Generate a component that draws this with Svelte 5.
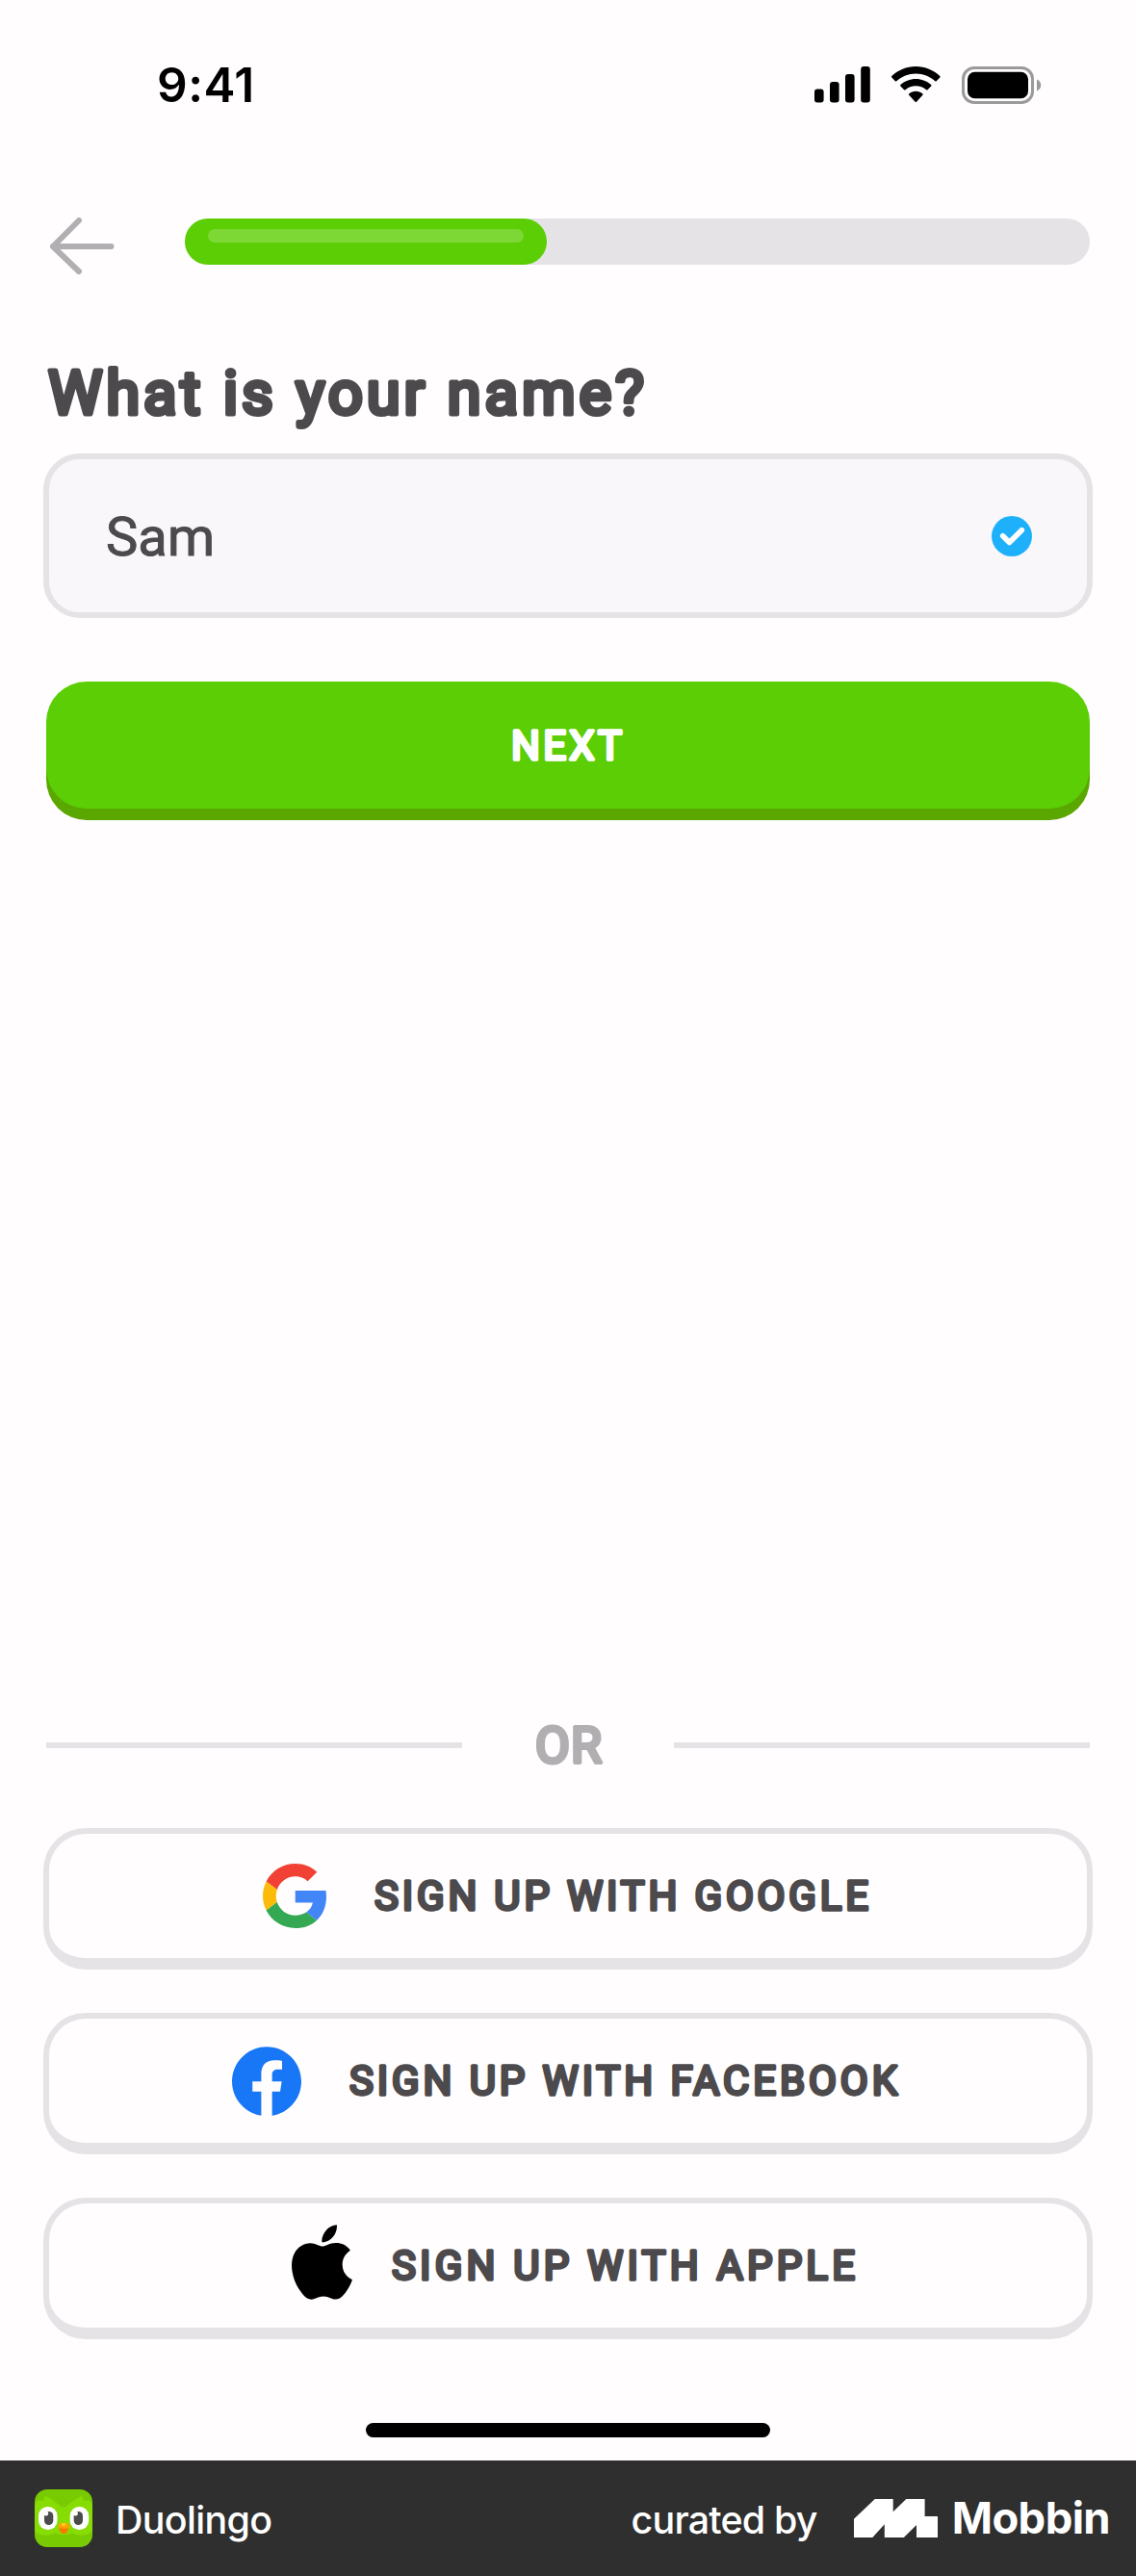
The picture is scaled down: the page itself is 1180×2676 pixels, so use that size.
<script>
  const providers = [
    { id: 'google', label: 'SIGN UP WITH GOOGLE', width: 513 },
    { id: 'facebook', label: 'SIGN UP WITH FACEBOOK', width: 569 },
    { id: 'apple', label: 'SIGN UP WITH APPLE', width: 481 }
  ];
  const progress = 40;
</script>

<!-- Text with round stroke joins, which gives the letters soft corners -->
{#snippet rounded(text, kind, width, height, baseline)}
  <svg class="rounded {kind}" {width} {height} viewBox="0 0 {width} {height}">
    <text x="0" y={baseline} textLength={width}>{text}</text>
  </svg>
{/snippet}

<div class="screen">
  <header class="status">
    <span class="time">9:41</span>
    <div class="indicators">
      <svg width="59" height="38" viewBox="0 0 59 38">
        <rect x="0" y="23.5" width="9.6" height="14" rx="3" />
        <rect x="16" y="16" width="9.6" height="21.5" rx="3" />
        <rect x="32" y="8" width="9.6" height="29.5" rx="3" />
        <rect x="48.2" y="0" width="9.6" height="37.5" rx="3" />
      </svg>
      <svg class="wifi" width="51" height="38" viewBox="0 0 51 38">
        <path d="M25.3 0C35 0 43.800 3.800 50.300 10.100q.6.7 0 1.400l-3.600 3.700q-.7.700-1.400 0C39.900 10.200 33 7.400 25.300 7.400S10.700 10.200 5.300 15.200q-.7.700-1.400 0L.3 11.500q-.6-.7 0-1.400C6.800 3.800 15.600 0 25.300 0z" />
        <path d="M25.300 12.900c6.100 0 11.700 2.300 15.900 6.200q.7.700 0 1.400l-3.700 3.800q-.7.600-1.400 0c-2.900-2.600-6.700-4.100-10.800-4.100s-7.900 1.500-10.800 4.100q-.7.600-1.400 0l-3.700-3.800q-.7-.7 0-1.400c4.200-3.900 9.800-6.200 15.900-6.200z" />
        <path d="M25.300 25.700c2.700 0 5.100 1 7 2.600q.8.700.1 1.400l-6.400 7q-.7.700-1.400 0l-6.400-7q-.7-.7.100-1.400c1.900-1.600 4.300-2.600 7-2.600z" />
      </svg>
      <svg width="83" height="39" viewBox="0 0 83 39">
        <rect x="1.500" y="1.500" width="72" height="36" rx="11.500" fill="none" stroke="#9b9a9b" stroke-width="3" />
        <rect x="6" y="5.700" width="63" height="27.600" rx="7.500" />
        <path d="M78 13.500c2.600 1 4.200 3.300 4.200 6s-1.600 5-4.200 6z" fill="#9b9a9b" />
      </svg>
    </div>
  </header>

  <nav class="top">
    <svg class="back" width="68" height="60" viewBox="0 0 68 60">
      <path d="M31 3 4 30 31 56M4 30H64.500" />
    </svg>
    <div class="track"><div class="fill" style:width="{progress}%"><i></i></div></div>
  </nav>

  <main>
    <h1>{@render rounded('What is your name?', 'title', 619, 50, 48)}</h1>
    <div class="field">
      {@render rounded('Sam', 'value', 113, 42, 41)}
      <svg width="42" height="42" viewBox="0 0 42 42">
        <circle cx="21" cy="21" r="21" fill="#1fb0fb" />
        <path d="M11.700 20.800l6.800 6.800L31.300 14.800" fill="none" stroke="#fff" stroke-width="5.600" stroke-linecap="round" stroke-linejoin="round" />
      </svg>
    </div>
    <button class="next">{@render rounded('NEXT', 'action', 115, 33, 30.5)}</button>
  </main>

  <section class="alternatives">
    <div class="or">
      <hr />
      {@render rounded('OR', 'divider', 69, 41, 39)}
      <hr />
    </div>
    {#each providers as p}
      <button class="provider {p.id}">
        {#if p.id === 'google'}
          <svg width="66" height="67" viewBox="0 0 47 48" preserveAspectRatio="none">
            <path fill="#f04134" d="M24 9.500c3.540 0 6.710 1.220 9.210 3.600l6.850-6.850C35.900 2.380 30.470 0 24 0 14.620 0 6.510 5.380 2.560 13.220l7.980 6.190C12.430 13.720 17.740 9.500 24 9.500z" />
            <path fill="#4285f7" d="M46.980 24.550c0-1.570-.15-3.090-.38-4.550H24v9.020h12.940c-.58 2.960-2.260 5.480-4.780 7.180l7.730 6c4.510-4.180 7.090-10.360 7.090-17.650z" />
            <path fill="#fcbb0a" d="M10.530 28.590c-.48-1.450-.76-2.990-.76-4.590s.27-3.140.76-4.590l-7.980-6.190C.92 16.460 0 20.120 0 24c0 3.880.92 7.540 2.560 10.780l7.970-6.190z" />
            <path fill="#34a853" d="M24 48c6.480 0 11.930-2.130 15.890-5.810l-7.730-6c-2.150 1.450-4.920 2.300-8.160 2.300-6.260 0-11.570-4.220-13.470-9.910l-7.980 6.190C6.510 42.620 14.620 48 24 48z" />
          </svg>
        {:else if p.id === 'facebook'}
          <svg width="72" height="72" viewBox="0 0 24 24">
            <path fill="#1877f6" d="M24 12.073c0-6.627-5.373-12-12-12s-12 5.373-12 12c0 5.990 4.388 10.954 10.125 11.854v-8.385H7.078v-3.470h3.047V9.430c0-3.007 1.792-4.669 4.533-4.669 1.312 0 2.686.235 2.686.235v2.953H15.830c-1.491 0-1.956.925-1.956 1.874v2.250h3.328l-.532 3.470h-2.796v8.385C19.612 23.027 24 18.062 24 12.073z" />
          </svg>
        {:else}
          <svg width="63" height="78" viewBox="2.220 0 19.560 24">
            <path d="M12.152 6.896c-.948 0-2.415-1.078-3.960-1.040-2.040.027-3.910 1.183-4.961 3.014-2.117 3.675-.546 9.103 1.519 12.090 1.013 1.454 2.208 3.090 3.792 3.039 1.520-.065 2.090-.987 3.935-.987 1.831 0 2.350.987 3.960.948 1.637-.026 2.676-1.480 3.676-2.948 1.156-1.688 1.636-3.325 1.662-3.415-.039-.013-3.182-1.221-3.220-4.857-.026-3.040 2.480-4.494 2.597-4.559-1.429-2.090-3.623-2.324-4.390-2.376-2-.156-3.675 1.090-4.610 1.090zM15.530 3.830c.843-1.012 1.400-2.427 1.245-3.830-1.207.052-2.662.805-3.532 1.818-.780.896-1.454 2.338-1.273 3.714 1.338.104 2.715-.688 3.559-1.701" />
          </svg>
        {/if}
        {@render rounded(p.label, 'action', p.width, 33, 30.5)}
      </button>
    {/each}
    <div class="home"></div>
  </section>

  <footer>
    <svg width="60" height="60" viewBox="0 0 60 60">
      <defs><clipPath id="tile"><rect width="60" height="60" rx="13" /></clipPath></defs>
      <g clip-path="url(#tile)">
        <rect width="60" height="60" fill="#78cb00" />
        <path d="M0 17 3 11l6 1 2-5c7 2 12 8 17 11q2 1 4 0c5-3 10-9 17-11l2 5 6-1 3 6v26c-5 6-16 6-21 2-3 3-15 3-18 0-5 4-16 4-21-2z" fill="#87dc04" />
        <rect x="4" y="18" width="19.500" height="24" rx="9.500" fill="#fff" />
        <rect x="36.700" y="18" width="19.500" height="24" rx="9.500" fill="#fff" />
        <rect x="10" y="23" width="9.300" height="14" rx="4.600" fill="#4b4b4b" />
        <rect x="40.700" y="23" width="9.300" height="14" rx="4.600" fill="#4b4b4b" />
        <circle cx="11.700" cy="25" r="2.500" fill="#fff" />
        <circle cx="42.400" cy="25" r="2.500" fill="#fff" />
        <path d="M25.500 40h9.500c0 8-9.500 8-9.500 0z" fill="#f57c00" />
        <path d="M24 38.500c2-5.500 10.500-5.500 13 0-1.500 3-11.500 3-13 0z" fill="#ffa200" />
        <ellipse cx="30" cy="36.500" rx="2.400" ry="1.500" fill="#ffd02b" />
      </g>
    </svg>
    <span class="app">Duolingo</span>
    <span class="by">curated by</span>
    <svg class="mark" width="87" height="40" viewBox="0 0 87 40">
      <path d="M21.800 0H40.700V13.300L54.300 0H73.600V18H87V40H65V27L51.800 40H31.800V26.300L19.300 40H0V20.700z" fill="#fff" />
    </svg>
    <span class="brand">Mobbin</span>
  </footer>
</div>

<style>
  :global(body) { margin: 0; background: #fffdfe; }
  .screen {
    width: 1180px;
    height: 2676px;
    display: flex;
    flex-direction: column;
    font-family: Inter, "Liberation Sans", sans-serif;
    color: #4c4a4c;
    overflow: hidden;
  }
  svg { display: block; flex: none; }
  button { font: inherit; margin: 0; box-sizing: border-box; }

  .status {
    height: 176px;
    box-sizing: border-box;
    padding: 0 98px 0 163px;
    display: flex;
    align-items: center;
    justify-content: space-between;
    color: #000;
  }
  .time { font-size: 49.5px; font-weight: 600; line-height: 60px; letter-spacing: 0.5px; }
  .indicators { display: flex; align-items: center; }
  .wifi { margin: 0 22px 0 21.500px; }

  .top {
    display: flex;
    align-items: flex-start;
    justify-content: space-between;
    padding: 50px 48px 0 51px;
  }
  .back path { fill: none; stroke: #b1afb1; stroke-width: 6; stroke-linecap: round; stroke-linejoin: round; }
  .track { width: 940px; height: 48px; margin-top: 1px; border-radius: 24px; background: #e5e3e6; }
  .fill { height: 48px; box-sizing: border-box; padding: 11px 24px; border-radius: 24px; background: #5bce05; }
  .fill i { display: block; height: 14px; border-radius: 7px; background: #7dd835; }

  .rounded { overflow: visible; }
  .rounded text { font-family: Roboto, sans-serif; font-weight: 400; fill: currentColor; stroke: currentColor; stroke-linejoin: round; }
  .title text { font-size: 63.500px; stroke-width: 5px; }
  .value text { font-size: 56px; stroke-width: 1px; }
  .action text { font-size: 42px; stroke-width: 3.400px; }
  .divider text { font-size: 52px; stroke-width: 4.200px; }

  main { padding: 96px 45px 0; }
  h1 { margin: 0 0 39px 5px; }
  .field {
    height: 171px;
    box-sizing: border-box;
    border: 6px solid #e5e3e6;
    border-radius: 38px;
    background: #f9f7fa;
    padding: 0 57px 0 59px;
    display: flex;
    align-items: center;
    justify-content: space-between;
  }
  .next {
    display: flex;
    align-items: center;
    justify-content: center;
    width: 1084px;
    height: 132px;
    margin: 66px 3px 0;
    padding: 0 4px 0 0;
    border: 0;
    border-radius: 42px;
    background: #5bce05;
    box-shadow: 0 12px 0 #5aa700;
    color: #fff;
  }

  .alternatives { margin-top: auto; padding: 0 45px; display: flex; flex-direction: column; }
  .or { display: flex; align-items: center; justify-content: space-between; margin: 0 3px 66px; color: #b1afb1; }
  .or hr { width: 432px; height: 6px; margin: 0; border: 0; background: #e5e3e6; }
  .provider {
    display: flex;
    align-items: center;
    justify-content: center;
    gap: 50px;
    width: 1090px;
    height: 147px;
    margin-bottom: 45px;
    padding: 0 6px 0 0;
    border: solid #e5e3e6;
    border-width: 6px 6px 12px;
    border-radius: 44px;
    background: #fffdfe;
    color: #4c4a4c;
  }
  .facebook { padding-right: 8px; }
  .apple { gap: 41px; padding: 0 0 0 10px; margin-bottom: 87px; }
  .apple svg:first-child { margin-bottom: 7px; }
  .apple path { fill: #000; }
  .home { width: 420px; height: 15px; border-radius: 8px; margin: 0 auto 24px; background: #000; }

  footer {
    height: 120px;
    box-sizing: border-box;
    padding: 0 27px 0 36px;
    display: flex;
    align-items: center;
    background: #2f2f2f;
    color: #fff;
  }
  .app, .by { font-size: 39.400px; font-weight: 500; line-height: 50px; padding-top: 3px; }
  .app { margin-left: 24px; letter-spacing: -0.650px; }
  .by { margin-left: auto; letter-spacing: -0.800px; }
  .mark { margin: 0 15px 0 38px; }
  .brand { font-size: 45.400px; font-weight: 700; line-height: 50px; letter-spacing: -0.600px; }
</style>
